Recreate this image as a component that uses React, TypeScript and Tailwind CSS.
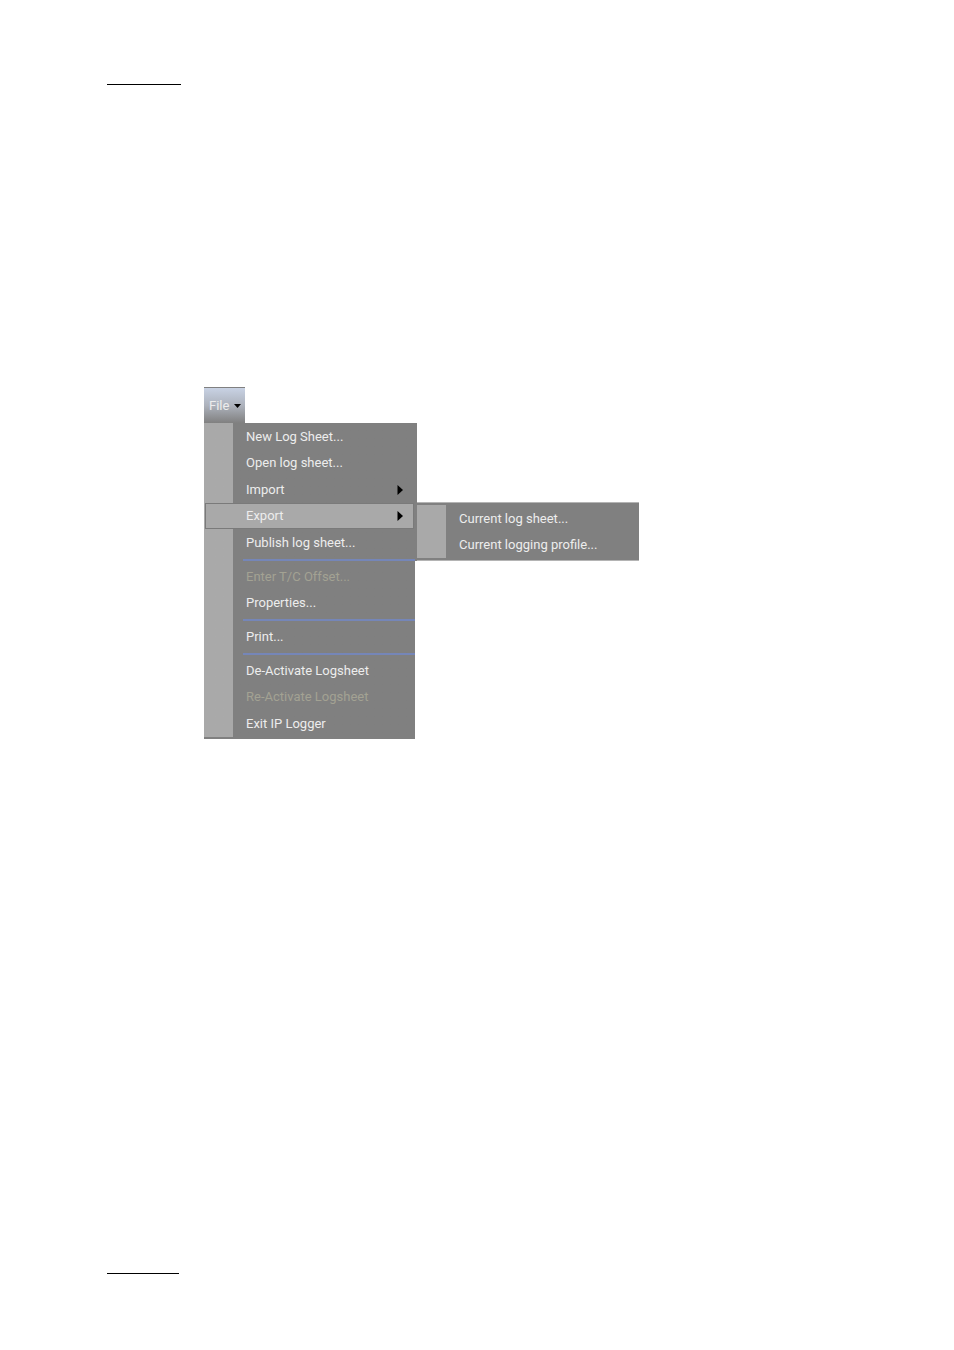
import React from 'react';

interface MenuEntry {
  label: string;
  disabled?: boolean;
  submenu?: boolean;
  items?: MenuEntry[];
}

const fileMenu: MenuEntry[][] = [
  [
    { label: 'New Log Sheet...' },
    { label: 'Open log sheet...' },
    { label: 'Import', submenu: true },
    {
      label: 'Export',
      submenu: true,
      items: [{ label: 'Current log sheet...' }, { label: 'Current logging profile...' }],
    },
    { label: 'Publish log sheet...' },
  ],
  [{ label: 'Enter T/C Offset...', disabled: true }, { label: 'Properties...' }],
  [{ label: 'Print...' }],
  [
    { label: 'De-Activate Logsheet' },
    { label: 'Re-Activate Logsheet', disabled: true },
    { label: 'Exit IP Logger' },
  ],
];

const RightArrow = () => (
  <svg className="h-[10px] w-[6px]" viewBox="0 0 6 10" fill="#000" aria-hidden="true">
    <path d="M0.5 0 L6 5 L0.5 10 Z" />
  </svg>
);

const DownArrow = () => (
  <svg className="h-1 w-[7px]" viewBox="0 0 7 4" fill="#000" aria-hidden="true">
    <path d="M0 0 H7 L3.5 4 Z" />
  </svg>
);

const Submenu: React.FC<{ items: MenuEntry[] }> = ({ items }) => (
  <div className="absolute -top-px left-full w-[222px] border-y border-[#b4b4b4] bg-[#808080] py-[2px]">
    <ul className="border-l-[29px] border-[#a9a9a9]">
      {items.map((item) => (
        <li key={item.label} className="odd:h-[27px] even:h-[26px]">
          <button type="button" className="flex h-full w-full items-center whitespace-nowrap pl-[13px] text-[#ededed]">
            {item.label}
          </button>
        </li>
      ))}
    </ul>
  </div>
);

const MenuItem: React.FC<{ item: MenuEntry }> = ({ item }) => (
  <li className={`relative odd:h-[27px] even:h-[26px] ${item.items ? 'pr-[3px] pl-px' : ''}`}>
    <button
      type="button"
      disabled={item.disabled}
      className={`flex h-full w-full items-center justify-between whitespace-nowrap ${
        item.items ? 'border border-[#7a7a7a] bg-[#a9a9a9] pr-[10px] pl-[40px]' : 'pr-[14px] pl-[42px]'
      } ${item.disabled ? 'text-[#a3a293]' : 'text-[#ededed]'}`}
    >
      <span>{item.label}</span>
      {item.submenu && <RightArrow />}
    </button>
    {item.items && <Submenu items={item.items} />}
  </li>
);

export default function App() {
  return (
    <div className="flex min-h-screen flex-col bg-white px-[107px] pt-[84px] pb-[76px]">
      <hr className="w-[74px] border-t border-black" />

      <nav className="mt-[302px] ml-[97px] flex flex-col items-start font-['Roboto','Liberation_Sans',sans-serif] text-[13px] leading-4">
        <button
          type="button"
          className="flex h-9 w-[41px] items-center gap-[5px] border-t border-[#808080] bg-linear-to-b from-[#c8d2e4] via-[#adb2bc] to-[#808080] pl-[5px] text-[#ededed]"
        >
          File
          <DownArrow />
        </button>

        <div className="w-[211px]">
          {fileMenu.map((group, i) => (
            <div
              key={i}
              className={`bg-linear-to-r from-[#a9a9a9] from-[29px] to-[#808080] to-[29px] ${
                i === 0 ? 'w-[213px]' : 'pt-[2px]'
              }`}
            >
              <ul>
                {group.map((item) => (
                  <MenuItem key={item.label} item={item} />
                ))}
              </ul>
              {i < fileMenu.length - 1 && (
                <div className="h-[5px] pt-[3px] pl-[39px]">
                  <hr className="w-[172px] border-t-2 border-[#7586b8]" />
                </div>
              )}
            </div>
          ))}
          <div className="h-[2px] bg-[#808080]" />
        </div>
      </nav>

      <hr className="mt-auto w-[72px] border-t border-black" />
    </div>
  );
}
